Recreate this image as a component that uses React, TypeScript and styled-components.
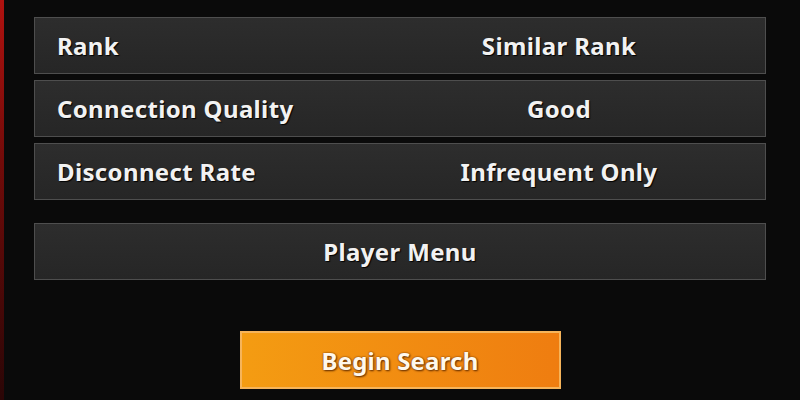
import styled, { createGlobalStyle } from 'styled-components';

const GlobalStyle = createGlobalStyle`
  html, body {
    margin: 0;
    padding: 0;
    background: #0a0a0a;
  }
  body {
    font-family: "Noto Sans", "DejaVu Sans", sans-serif;
  }
`;

const Screen = styled.div`
  width: 800px;
  height: 400px;
  box-sizing: border-box;
  padding: 17px 34px 0 34px;
  background: #0a0a0a;
  position: relative;
  overflow: hidden;
  display: flex;
  flex-direction: column;

  &::before {
    content: '';
    position: absolute;
    left: 0;
    top: 0;
    bottom: 0;
    width: 4px;
    background: linear-gradient(to bottom, #b0120f 0%, #720b09 40%, #2a0606 100%);
  }
`;

const SettingsList = styled.div`
  display: flex;
  flex-direction: column;
  gap: 6px;
`;

const Row = styled.div`
  height: 57px;
  box-sizing: border-box;
  display: flex;
  align-items: center;
  background: linear-gradient(to bottom, #2d2d2d, #262626);
  border: 1px solid #4e4e4e;
  color: #f2f2f2;
  font-size: 24px;
  font-weight: 700;
  letter-spacing: 0.35px;
  text-shadow: 1px 1px 1px #000;
`;

const Label = styled.div`
  width: 318px;
  padding-left: 22px;
  box-sizing: border-box;
`;

const Value = styled.div`
  flex: 1;
  text-align: center;
`;

const MenuRow = styled(Row)`
  margin-top: 23px;
  justify-content: center;
`;

const ButtonArea = styled.div`
  display: flex;
  justify-content: center;
  margin-top: 51px;
`;

const SearchButton = styled.button`
  width: 321px;
  height: 58px;
  box-sizing: border-box;
  border: 2px solid #f6b45a;
  background: linear-gradient(to right, #f49c12, #ef7d10);
  color: #fff8ec;
  font-family: "Noto Sans", "DejaVu Sans", sans-serif;
  font-size: 24px;
  font-weight: 700;
  letter-spacing: 0.2px;
  text-shadow: 1px 1px 2px #6a3200, 0 0 2px #6a3200;
  padding: 0;
`;

const settings = [
  { label: 'Rank', value: 'Similar Rank' },
  { label: 'Connection Quality', value: 'Good' },
  { label: 'Disconnect Rate', value: 'Infrequent Only' },
];

const App = () => {
  return (
    <>
      <GlobalStyle />
      <Screen>
        <SettingsList>
          {settings.map(s => (
            <Row key={s.label}>
              <Label>{s.label}</Label>
              <Value>{s.value}</Value>
            </Row>
          ))}
        </SettingsList>
        <MenuRow>Player Menu</MenuRow>
        <ButtonArea>
          <SearchButton>Begin Search</SearchButton>
        </ButtonArea>
      </Screen>
    </>
  );
};

export default App;
